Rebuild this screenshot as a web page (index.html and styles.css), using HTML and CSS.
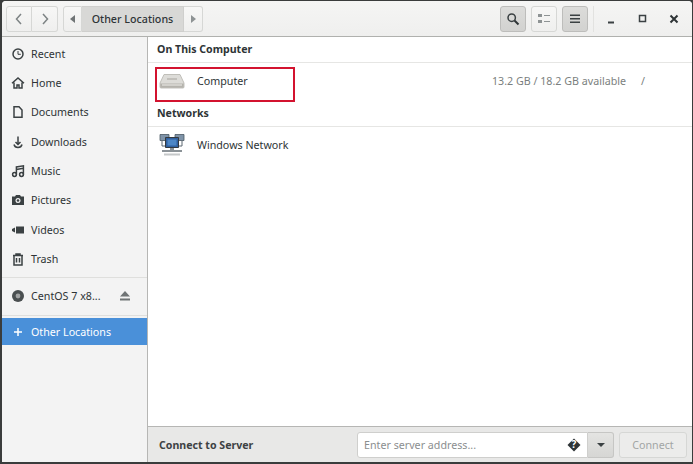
FILE: index.html
```html
<!DOCTYPE html>
<html lang="en">
<head>
<meta charset="utf-8">
<title>Other Locations</title>
<link rel="stylesheet" href="styles.css">
</head>
<body>
<div class="window">
  <header class="headerbar">
    <div class="linked nav">
      <button class="btn nav-btn"><svg width="12" height="14" viewBox="0 0 12 14"><path d="M8 2 3.500 7 8 12" class="st"/></svg></button>
      <button class="btn nav-btn"><svg width="12" height="14" viewBox="0 0 12 14"><path d="M4 2l4.500 5L4 12" class="st"/></svg></button>
    </div>
    <div class="linked path">
      <button class="btn arrow-btn"><svg width="6" height="8" viewBox="0 0 6 8"><path d="M5 0v8L0 4z" class="fl-arrow"/></svg></button>
      <button class="btn path-current">Other Locations</button>
      <button class="btn arrow-btn"><svg width="6" height="8" viewBox="0 0 6 8"><path d="M1 0v8l5-4z" class="fl-soft"/></svg></button>
    </div>
    <div class="spacer"></div>
    <button class="btn tool active"><svg width="14" height="14" viewBox="0 0 14 14"><circle cx="5.700" cy="5.700" r="3.700" class="st2"/><path d="M8.500 8.500 12.500 12.500" class="st3"/></svg></button>
    <button class="btn tool"><svg width="14" height="12" viewBox="0 0 14 12"><path d="M1 1h4v3H1zM1 7h4v3H1zM7 2h6v1H7zM7 8h6v1H7z" class="fl-soft"/></svg></button>
    <button class="btn tool active"><svg width="12" height="12" viewBox="0 0 12 12"><path d="M1 1.500h10v1.500H1zM1 5h10v1.500H1zM1 8.500h10V10H1z" class="fl"/></svg></button>
    <div class="divider"></div>
    <div class="winctl">
      <svg width="10" height="10" viewBox="0 0 10 10"><path d="M1 7.500h6v2H1z" class="fl"/></svg>
      <svg width="10" height="10" viewBox="0 0 10 10"><path d="M1.500 1.500h6v6h-6z" class="st2"/></svg>
      <svg width="10" height="10" viewBox="0 0 10 10"><path d="M1.500 1.500l7 7M8.500 1.500l-7 7" class="st3"/></svg>
    </div>
  </header>
  <div class="body">
    <nav class="sidebar">
      <a class="row"><svg class="ic" viewBox="0 0 14 14"><circle cx="7" cy="7" r="5" class="st2"/><path d="M7 4v3.300h2.800" class="st1"/></svg><span>Recent</span></a>
      <a class="row"><svg class="ic" viewBox="0 0 14 14"><path d="M1 7.300 7 2l6 5.300M3 6.500V12h3V9h2v3h3V6.500" class="st2"/></svg><span>Home</span></a>
      <a class="row"><svg class="ic" viewBox="0 0 14 14"><path d="M3 1.800h5L11 5v7.200H3z" class="st2"/></svg><span>Documents</span></a>
      <a class="row"><svg class="ic" viewBox="0 0 14 14"><path d="M7 1.500V9M4.500 7 7 9.500 9.500 7M3 9.500C3.500 11.500 5 12.500 7 12.500s3.500-1 4-3" class="st2"/></svg><span>Downloads</span></a>
      <a class="row"><svg class="ic" viewBox="0 0 14 14"><circle cx="3.500" cy="10.500" r="1.900" class="st2"/><circle cx="10.500" cy="10.500" r="1.900" class="st2"/><path d="M5.400 10.500V3l7-1.200v8.700M5.400 5.500l7-1.200" class="st2"/></svg><span>Music</span></a>
      <a class="row"><svg class="ic" viewBox="0 0 14 14"><path d="M1 3.500h3L5 2h4l1 1.500h3V12H1z" class="fl"/><circle cx="7" cy="7.500" r="2.500" fill="#f3f3f3"/><circle cx="7" cy="7.500" r="1.300" class="fl"/></svg><span>Pictures</span></a>
      <a class="row"><svg class="ic" viewBox="0 0 14 14"><path d="M5 3.500h8v7H5zM1 6l3-1.500v5L1 8z" class="fl"/></svg><span>Videos</span></a>
      <a class="row"><svg class="ic" viewBox="0 0 14 14"><path d="M2 3.500h10M5 3.500V2h4v1.500M3 3.500V13h8V3.500M5.500 6v4.500M8.500 6v4.500" class="st2"/></svg><span>Trash</span></a>
      <div class="sep"></div>
      <a class="row row-disc"><svg class="ic" viewBox="0 0 14 14"><circle cx="7" cy="7" r="6" fill="#4a4f50"/><circle cx="7" cy="7" r="2.400" fill="#a0a2a2"/></svg><span class="grow">CentOS 7 x8...</span><svg class="eject" viewBox="0 0 12 10"><path d="M6 0l5 5.500H1zM1 7.500h10V9.500H1z" class="fl-arrow"/></svg></a>
      <div class="sep sep-low"></div>
      <a class="row selected"><svg class="ic" viewBox="0 0 14 14"><path d="M7 3v8M3 7h8" class="st-w"/></svg><span>Other Locations</span></a>
    </nav>
    <main class="content">
      <div class="places">
        <h2 class="section">On This Computer</h2>
        <div class="item">
          <svg class="item-ic" viewBox="0 0 26 18"><path d="M5 2.500h16l4 8.500v4q0 1-1 1H2q-1 0-1-1v-4z" fill="#dddcd8" stroke="#b4b2ac" stroke-width=".8"/><path d="M1.300 11.500h23.400v3.300q0 1-1 1H2.300q-1 0-1-1z" fill="#b5b3ad"/><path d="M8 6h10v2H8z" fill="#c2c0bb"/><path d="M3 13h20" stroke="#f0efeb" stroke-width="1"/></svg>
          <span class="item-name">Computer</span>
          <span class="avail">13.2 GB / 18.2 GB available</span>
          <span class="mount">/</span>
        </div>
        <h2 class="section sec-net">Networks</h2>
        <div class="item item-net">
          <svg class="item-ic" viewBox="0 0 26 24"><path d="M1 1.500h9v6H1zM16 1.500h9v6h-9z" fill="#7f93a8" stroke="#4a5863" stroke-width=".8"/><path d="M6.500 4.500h13v10h-13z" fill="#2f5f9e" stroke="#33393f"/><path d="M8.500 6.500h9v6h-9z" fill="#4c86c6"/><path d="M3 8v5h3M23 8v5h-3" stroke="#5a6670" fill="none"/><path d="M11 15h4v2h-4zM3 17h20v2H3z" fill="#8b9297"/><path d="M5 20.500h16v2H5z" fill="#c5c8c9"/></svg>
          <span class="item-name">Windows Network</span>
        </div>
      </div>
      <footer class="connect">
        <span class="connect-label">Connect to Server</span>
        <div class="combo">
          <div class="entry"><span class="placeholder">Enter server address...</span>
            <svg width="14" height="14" viewBox="0 0 14 14"><path d="M7 .5 13.500 7 7 13.500.5 7z" fill="#2e3436"/><text x="7" y="10.300" class="qmark">?</text></svg>
          </div>
          <button class="btn drop"><svg width="8" height="4" viewBox="0 0 8 4"><path d="M0 0h8L4 4z" class="fl"/></svg></button>
        </div>
        <button class="btn connect-btn">Connect</button>
      </footer>
    </main>
  </div>
  <div class="annotation"></div>
</div>
</body>
</html>
```
FILE: styles.css
```css
* { box-sizing: border-box; }
html, body { margin: 0; padding: 0; }
body {
  width: 693px; height: 464px; overflow: hidden; background: #3a3c3c;
  font-family: "Noto Sans", "Open Sans", sans-serif; font-size: 10.700px; color: #2e3436;
}
.window {
  position: relative; width: 690px; height: 461px; margin: 1px 1px 0 2px;
  background: #fff; display: flex; flex-direction: column;
  border-radius: 4px 4px 0 0; overflow: hidden;
}
.st { fill: none; stroke: #7d8384; stroke-width: 1.500; }
.st1 { fill: none; stroke: #3b4143; stroke-width: 1; }
.st2 { fill: none; stroke: #3b4143; stroke-width: 1.500; }
.st3 { fill: none; stroke: #2e3436; stroke-width: 2; }
.st-w { fill: none; stroke: #fff; stroke-width: 1.500; }
.fl { fill: #3b4143; }
.fl-arrow { fill: #6f7475; }
.fl-soft { fill: #8e9394; }
.headerbar {
  height: 36px; flex: none; display: flex; align-items: center; padding: 0 0 0 4px;
  background: linear-gradient(#f5f5f4, #efefee); border-bottom: 1px solid #b0b1ae;
}
.btn {
  font: inherit; color: inherit; padding: 0; margin: 0; display: flex; align-items: center; justify-content: center;
  border: 1px solid #d6d7d5; border-radius: 3px; background: linear-gradient(#f7f7f6, #efefee);
}
.linked { display: flex; height: 26px; }
.linked .btn { border-radius: 0; }
.linked .btn + .btn { border-left: 0; }
.linked .btn:first-child { border-radius: 3px 0 0 3px; }
.linked .btn:last-child { border-radius: 0 3px 3px 0; }
.nav-btn { width: 26px; height: 26px; }
.path { margin-left: 5px; }
.arrow-btn { width: 19px; height: 26px; }
.path-current { width: 102px; height: 26px; background: #d8d8d6; border-color: #cfcfcd; font-weight: 500; }
.spacer { flex: 1; }
.tool { width: 26px; height: 26px; margin-left: 5px; }
.tool.active { background: linear-gradient(#dcdcda, #d2d2d0); border-color: #bdbdbb; }
.divider { width: 1px; height: 26px; background: #e2e2e0; margin-left: 5px; }
.winctl { display: flex; align-items: center; width: 98px; padding-left: 13px; gap: 21px; }
.body { flex: 1; display: flex; min-height: 0; }
.sidebar {
  width: 146px; flex: none; background: #f3f3f3; border-right: 1px solid #b6b6b4;
  padding-top: 2px; display: flex; flex-direction: column;
}
.row { display: flex; align-items: center; height: 29.330px; padding-left: 9px; gap: 6px; flex: none; }
.ic { width: 14px; height: 14px; flex: none; }
.grow { flex: 1; }
.eject { width: 12px; height: 10px; margin-right: 16px; }
.sep { height: 1px; background: #dfdfdd; margin-top: 3.500px; margin-bottom: 3px; flex: none; }
.sep-low { margin-top: 5px; margin-bottom: 2px; }
.selected { background: #4a90d9; color: #fff; height: 27px; }
.content { flex: 1; display: flex; flex-direction: column; min-width: 0; }
.places { flex: 1; min-height: 0; }
.section {
  margin: 0; height: 26px; display: flex; align-items: center; padding: 0 0 2px 9px;
  font-size: 10.600px; font-weight: 700; color: #2e3436; border-bottom: 1px solid #e6e6e4;
}
.sec-net { height: 27px; padding-bottom: 0; }
.item { display: flex; align-items: center; height: 37px; padding-left: 11px; position: relative; padding-bottom: 2px; }
.item-net { height: 38px; }
.item-ic { width: 26px; height: 24px; flex: none; }
.item-name { margin-left: 12px; width: 295px; }
.avail { color: #7b7f80; width: 149px; }
.mount { color: #7b7f80; }
.connect {
  height: 36px; flex: none; background: #e8e8e7; border-top: 1px solid #b6b6b4;
  display: flex; align-items: center; padding-left: 11px;
}
.connect-label { font-weight: 700; font-size: 10.600px; color: #3d4244; width: 198px; }
.combo { display: flex; height: 26px; }
.entry {
  width: 231px; display: flex; align-items: center; justify-content: space-between; padding: 0 6px;
  background: #fff; border: 1px solid #cfcfcd; border-radius: 3px 0 0 3px;
}
.placeholder { color: #8b8e8f; }
.qmark { font-size: 10px; font-weight: 700; fill: #fff; text-anchor: middle; }
.drop { width: 26px; border-left: 0; border-radius: 0 3px 3px 0; background: linear-gradient(#e4e4e2, #d6d6d4); border-color: #c6c6c4; }
.connect-btn { width: 68px; height: 26px; margin-left: 5px; color: #a2a5a5; background: #ececeb; }
.annotation {
  position: absolute; left: 153px; top: 66px; width: 140px; height: 35px;
  border: 2px solid #d3132f; pointer-events: none;
}
```
